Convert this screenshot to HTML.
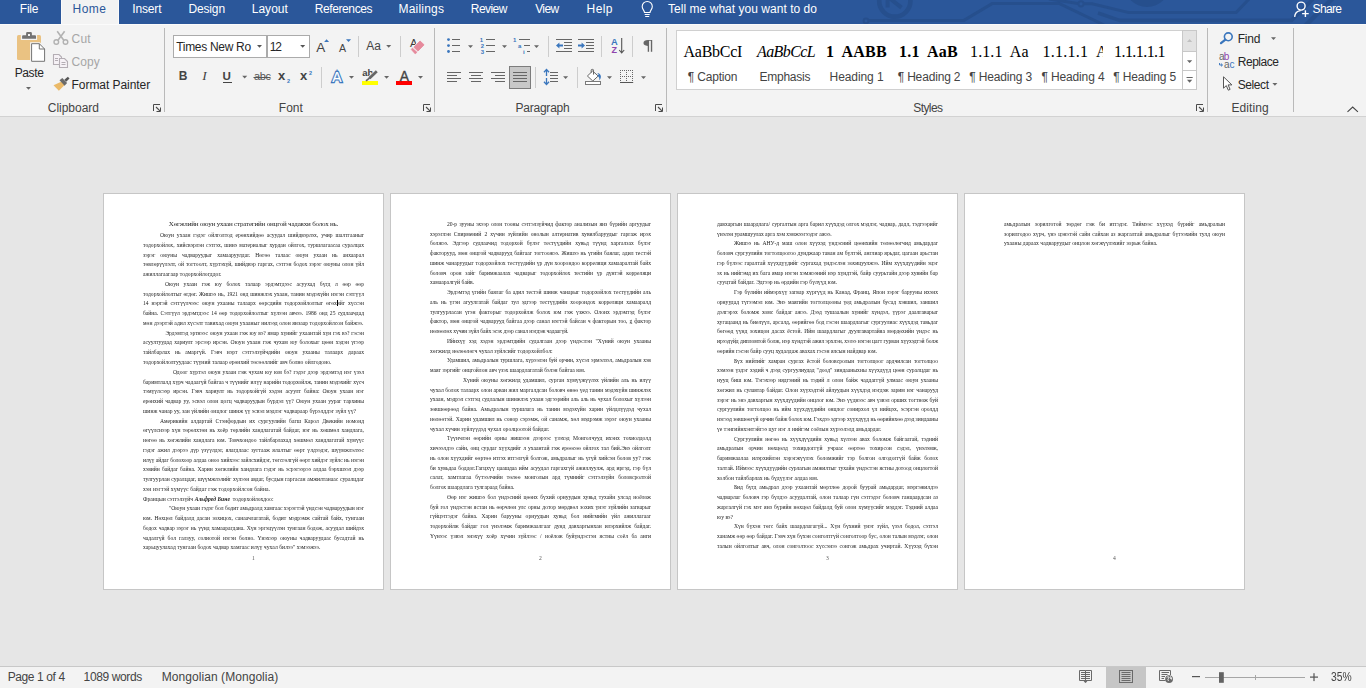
<!DOCTYPE html>
<html lang="mn"><head><meta charset="utf-8"><title>Word</title>
<style>
html,body{margin:0;padding:0;}
body{width:1366px;height:688px;overflow:hidden;position:relative;background:#e6e6e6;font-family:"Liberation Sans",sans-serif;}
.abs{position:absolute;}
#titlebar{position:absolute;left:0;top:0;width:1366px;height:24px;background:#2b579a;overflow:hidden;}
#hometab{position:absolute;left:61px;top:0;width:58px;height:25px;background:#f3f3f3;border-left:1px solid #fbfbfb;border-right:1px solid #fbfbfb;box-sizing:border-box;}
#ribbon{position:absolute;left:0;top:24px;width:1366px;height:92px;background:#f3f3f3;border-top:1px solid #fbfbfb;border-bottom:1px solid #d2d2d2;box-sizing:content-box;height:91px;}
#status{position:absolute;left:0;top:666px;width:1366px;height:22px;background:#f3f3f3;border-top:1px solid #c8c8c8;box-sizing:border-box;}
.t{position:absolute;white-space:pre;display:block;}
.sep{position:absolute;width:1px;background:#b9b9b9;}
.sep.s{background:#cdcdcd;}
.page{position:absolute;top:193px;width:279px;height:395px;background:#fff;border:1px solid #c6c6c6;}
.dl{position:absolute;height:9.75px;line-height:9.75px;font-family:"Liberation Serif",serif;color:#1e1e1e;white-space:nowrap;overflow:visible;}
.dl>span{display:inline;}
svg{position:absolute;overflow:visible;}
.box{position:absolute;box-sizing:border-box;}
#doc{position:absolute;left:0;top:0;width:1366px;height:688px;filter:grayscale(1);pointer-events:none;}

</style></head><body>
<div id="titlebar">
<svg width="1366" height="24" viewBox="0 0 1366 24" style="left:0;top:0">
 <g fill="none" stroke="#264f8d" stroke-linejoin="round">
  <circle cx="894.8" cy="1" r="15.6" stroke-width="4.6"/>
  <path d="M887.6 -1 V7.4 M890.5 -1 L901.5 7.6" stroke-width="4"/>
  <circle cx="866" cy="21" r="2.4" stroke-width="2"/>
  <path d="M868.5 20.6 H963.5 L992.5 3.4 H1059 L1100 23 L1104 25" stroke-width="3"/>
  <path d="M1049 -1 L1078 3.5" stroke-width="3"/>
  <circle cx="1081" cy="3.8" r="2.6" stroke-width="2"/>
  <path d="M1084 3.8 H1092 L1129 12.6 H1236 L1249 -1" stroke-width="3"/>
  <path d="M1098 13 L1119.5 20.4 H1291.5 L1313 -1" stroke-width="3.6"/>
  <path d="M1305 26 L1333 -2" stroke-width="4.4"/>
 </g>
 <circle cx="1147" cy="-16" r="23" fill="#264f8d"/>
</svg>
</div>
<div id="hometab"></div>
<div id="ribbon"></div>
<div id="status"></div>
<!-- group separators -->
<div class="sep" style="left:164px;top:28px;height:84px"></div>
<div class="sep" style="left:434px;top:28px;height:84px"></div>
<div class="sep" style="left:666px;top:28px;height:84px"></div>
<div class="sep" style="left:1207px;top:28px;height:84px"></div>
<div class="sep" style="left:1293px;top:28px;height:84px"></div>
<!-- small separators -->
<div class="sep s" style="left:321px;top:67px;height:21px"></div>
<div class="sep s" style="left:358px;top:36px;height:21px"></div>
<div class="sep s" style="left:400px;top:36px;height:21px"></div>
<div class="sep s" style="left:548px;top:36px;height:21px"></div>
<div class="sep s" style="left:601px;top:36px;height:21px"></div>
<div class="sep s" style="left:632px;top:36px;height:21px"></div>
<div class="sep s" style="left:535px;top:67px;height:21px"></div>
<div class="sep s" style="left:577px;top:67px;height:21px"></div>
<!-- font boxes -->
<div class="box" style="left:173px;top:35px;width:94px;height:23px;background:#fff;border:1px solid #ababab"></div>
<div class="box" style="left:267px;top:35px;width:43px;height:23px;background:#fff;border:1px solid #ababab"></div>
<!-- justify selected -->
<div class="box" style="left:509px;top:66px;width:22px;height:23px;background:#c8c8c8;border:1px solid #7c7c7c"></div>
<!-- styles gallery -->
<div class="box" style="left:676px;top:30px;width:521px;height:60px;background:#fff;border:1px solid #d0d0d0"></div>
<div class="box" style="left:1182px;top:30px;width:15px;height:22px;background:#e3e3e3;border:1px solid #c8c8c8"></div>
<div class="box" style="left:1182px;top:51px;width:15px;height:20px;background:#fff;border:1px solid #c8c8c8"></div>
<div class="box" style="left:1182px;top:70px;width:15px;height:20px;background:#fff;border:1px solid #c8c8c8"></div>
<!-- status selected view -->
<div class="box" style="left:1106px;top:667px;width:40px;height:21px;background:#c6c6c6"></div>
<svg width="1366" height="688" viewBox="0 0 1366 688" style="left:0;top:0" shape-rendering="auto">
<defs>
 <path id="dd" d="M0 0 h5 l-2.5 2.8 z"/>
 <g id="launch" fill="none" stroke="#4a4a4a" stroke-width="1"><path d="M0.5 7 V0.5 H7"/><path d="M3 3 L7.2 7.2" stroke-width="1.1"/><path d="M3.5 7.5 H7.5 V3.5"/></g>
</defs>
<!-- lightbulb -->
<g fill="none" stroke="#fff" stroke-width="1.1">
 <path d="M644.5 12.5 c0 -2 -2.3 -3 -2.3 -6 a5.05 5.05 0 0 1 10.1 0 c0 3 -2.3 4 -2.3 6 z"/>
 <path d="M644.7 14.5 h5 M645.2 16.5 h4"/>
</g>
<!-- share person -->
<g fill="none" stroke="#fff" stroke-width="1.4">
 <circle cx="1301.1" cy="6.1" r="4.0"/>
 <path d="M1294.6 16.9 C1294.9 13.2 1297.3 11 1300.6 10.6"/>
 <path d="M1302.1 13.6 h6.6 M1305.4 10.3 v6.6"/>
</g>
<!-- Paste icon -->
<rect x="17" y="35" width="24" height="25" rx="1.6" fill="#eac282"/>
<rect x="20.8" y="33" width="16.3" height="7" fill="#f3f3f3"/>
<path d="M22.1 38.8 V36.2 q0 -1 1 -1 H26.1 V33.3 q0 -1.2 1.2 -1.2 H30.7 q1.2 0 1.2 1.2 V35.2 H35 q1 0 1 1 V38.8 z" fill="#737373"/>
<rect x="28" y="34" width="2" height="2" fill="#f3f3f3"/>
<path d="M31.6 43.7 H39.3 L44.6 49 V61.3 H31.6 Z" fill="#f3f3f3" stroke="#f3f3f3" stroke-width="3"/>
<path d="M31.6 43.7 H39.3 L44.6 49 V61.3 H31.6 Z" fill="#fff" stroke="#737373" stroke-width="1"/>
<path d="M39.3 43.7 V49 H44.6" fill="none" stroke="#737373" stroke-width="1"/>
<use href="#dd" x="26" y="87" fill="#666"/>
<!-- Cut (disabled) -->
<g fill="none" stroke="#b2b2b2" stroke-width="1.4">
 <circle cx="56.3" cy="42" r="2.3"/><circle cx="65.5" cy="42" r="2.3"/>
 <path d="M58 40.2 L64.6 31.2 M63.8 40.2 L57.2 31.2" stroke-width="1.6"/>
</g>
<!-- Copy (disabled) -->
<g fill="#f6f2f6" stroke="#b4aeb4" stroke-width="1.1">
 <path d="M53.5 54.5 h5.5 l2.5 2.5 v7.5 h-8 z"/>
 <path d="M59.5 58.5 h5 l3 3 v6 h-8 z"/>
 <path d="M55 58.5 h3 M55 60.5 h3 M61.5 62.5 h4 M61.5 64.5 h4" />
</g>
<!-- Format painter -->
<path d="M53.5 85.2 l8.2 -3.8 l3.2 3.4 l-6 6 z" fill="#eab968"/>
<path d="M59.5 80.3 l2.8 -2.2 l4.8 5 l-2.5 2.6 z" fill="#6a6a6a"/>
<path d="M64.3 79.8 l3.6 -3 l1.6 1.7 l-3.3 3.2 z" fill="#555"/>
<!-- launchers -->
<use href="#launch" x="153" y="104"/>
<use href="#launch" x="423" y="104"/>
<use href="#launch" x="655" y="104"/>
<use href="#launch" x="1196" y="104"/>
<!-- font box arrows -->
<use href="#dd" x="257" y="45" fill="#555"/>
<use href="#dd" x="300.2" y="45" fill="#555"/>
<!-- grow/shrink triangles -->
<path d="M324.1 42.1 l2.5 -2.9 l2.5 2.9 z" fill="#3a76bd"/>
<path d="M346 39.2 h5.1 l-2.55 2.9 z" fill="#3a76bd"/>
<use href="#dd" x="386.2" y="45" fill="#666"/>
<!-- clear formatting eraser -->

<!-- U arrow -->
<use href="#dd" x="242.2" y="75.8" fill="#666"/>
<!-- underline for U -->
<rect x="223" y="82" width="9" height="1" fill="#444"/>
<!-- strike for abc -->
<rect x="253.5" y="77" width="17" height="1" fill="#555"/>
<!-- text effects A -->
<use href="#dd" x="349" y="76" fill="#666"/>
<!-- highlight -->

<rect x="362" y="81" width="16" height="4" fill="#ffff00"/>
<use href="#dd" x="384.1" y="76" fill="#666"/>
<!-- font color -->
<rect x="396" y="81" width="16" height="4" fill="#ff0000"/>
<use href="#dd" x="418" y="76" fill="#666"/>
<!-- bullets -->
<g fill="#3a76bd"><circle cx="448.5" cy="39.6" r="1.4"/><circle cx="448.5" cy="45.6" r="1.4"/><circle cx="448.5" cy="51.5" r="1.4"/></g>
<g stroke="#666" stroke-width="1" fill="none">
 <path d="M452 39.5 h8 M452 45.5 h8 M452 51.5 h8"/>
 <path d="M486 39.5 h9 M486 45.5 h9 M486 51.5 h9"/>
 <path d="M519 39.5 h11 M524 45.5 h6 M527 51.5 h3"/>
</g>
<use href="#dd" x="468" y="45.2" fill="#666"/>
<use href="#dd" x="502" y="45.2" fill="#666"/>
<use href="#dd" x="534" y="45.2" fill="#666"/>
<!-- indent icons -->
<g stroke="#666" stroke-width="1" fill="none">
 <path d="M556 39.5 h16 M564 42.5 h8 M564 45.5 h8 M564 48.5 h8 M556 51.5 h16"/>
 <path d="M578 39.5 h16 M586 42.5 h8 M586 45.5 h8 M586 48.5 h8 M578 51.5 h16"/>
</g>
<g fill="#3a76bd">
 <path d="M556 45.5 l3.4 -3 v2 h3.6 v2 h-3.6 v2 z"/>
 <path d="M585 45.5 l-3.4 -3 v2 h-3.6 v2 h3.6 v2 z"/>
</g>
<!-- sort arrow -->
<path d="M621.7 38 v14.5 M619.2 50 l2.5 2.8 l2.5 -2.8" stroke="#555" stroke-width="1.1" fill="none"/>
<!-- align icons -->
<g stroke="#666" stroke-width="1" fill="none">
 <path d="M447 72.5 h14 M447 75.5 h10 M447 78.5 h14 M447 81.5 h10"/>
 <path d="M469 72.5 h14 M471 75.5 h10 M469 78.5 h14 M471 81.5 h10"/>
 <path d="M491 72.5 h14 M495 75.5 h10 M491 78.5 h14 M495 81.5 h10"/>
 <path d="M513 72.5 h14 M513 75.5 h14 M513 78.5 h14 M513 81.5 h14"/>
 <path d="M550 72.5 h8 M550 75.5 h8 M550 78.5 h8 M550 81.5 h8"/>
</g>
<!-- line spacing arrows -->
<path d="M546.5 70 v6 M546.5 78 v6 M544 72.2 l2.5 -2.8 l2.5 2.8 M544 81.8 l2.5 2.8 l2.5 -2.8" stroke="#3a76bd" stroke-width="1.3" fill="none"/>
<use href="#dd" x="563.1" y="76.2" fill="#666"/>
<!-- shading -->
<path d="M592.6 71 l5.6 5 l-5.4 5 l-5.4 -5 z" fill="#fff" stroke="#666" stroke-width="1"/>
<path d="M591.2 72.6 v-2.4 q0 -0.8 0.8 -0.8 h0.7 q0.8 0 0.8 0.8 v4.4" fill="none" stroke="#666" stroke-width="1"/>
<path d="M597.2 73 C600.6 73.2 602.4 77 599.4 80.4 C599.7 77.8 598.9 76.5 597.3 75.7 L598.7 74.4 Z" fill="#3a76bd"/>
<rect x="585.5" y="81.5" width="15" height="3" fill="#fff" stroke="#7a7a7a" stroke-width="1"/>
<use href="#dd" x="607" y="76.2" fill="#666"/>
<!-- borders -->
<g stroke="#666" stroke-width="1" stroke-dasharray="1 1" fill="none">
 <path d="M620 70.5 h13 M620.5 70 v12 M632.5 70 v12 M626.5 70 v12 M620 76.5 h13"/>
</g>
<path d="M620 82.5 h13.2" stroke="#555" stroke-width="1" fill="none"/>
<use href="#dd" x="641" y="76.2" fill="#666"/>
<!-- gallery scroll arrows -->
<path d="M1187 42 l2.6 -2.9 l2.6 2.9 z" fill="#c0c0c0"/>
<path d="M1187 60.2 h5.2 l-2.6 2.9 z" fill="#666"/>
<path d="M1186.5 77.5 h6.2" stroke="#666" stroke-width="1"/>
<path d="M1187 79.8 h5.2 l-2.6 2.9 z" fill="#666"/>
<!-- find -->
<circle cx="1228.3" cy="36.8" r="3.9" fill="none" stroke="#3a76bd" stroke-width="1.6"/>
<path d="M1225.4 39.6 L1221 43.2" stroke="#3a76bd" stroke-width="2.2" stroke-linecap="round"/>
<use href="#dd" x="1271" y="37.2" fill="#666"/>
<!-- replace small arrow -->
<path d="M1219.6 63 v2 h2.6 M1221 63.6 l1.5 1.4 l-1.5 1.4" stroke="#3a76bd" stroke-width="1" fill="none"/>
<!-- select cursor -->
<path d="M1223.5 76.8 v11.4 l2.8 -2.6 l2 4.6 l1.8 -0.8 l-2 -4.5 h3.8 z" fill="#fff" stroke="#555" stroke-width="1" stroke-linejoin="round"/>
<use href="#dd" x="1272.4" y="83" fill="#666"/>
<!-- collapse chevron -->
<path d="M1347.5 111.8 l5.2 -4.7 l5.2 4.7" fill="none" stroke="#444" stroke-width="1.1"/>
<!-- status bar icons -->
<g fill="none" stroke="#6a6a6a" stroke-width="1">
 <path d="M1085.5 670.5 H1079.5 V680.5 H1091.5 V670.5 H1085.5 V682"/>
 <path d="M1081 672.5 h9 M1081 674.5 h9 M1081 676.5 h9 M1081 678.5 h9"/>
 <path d="M1084 681 l1.5 1.8 l1.5 -1.8" />
 <rect x="1119.5" y="670.5" width="13" height="12"/>
 <path d="M1121.5 672.5 h9 M1121.5 674.5 h9 M1121.5 676.5 h9 M1121.5 678.5 h9 M1121.5 680.5 h9"/>
 <path d="M1165.5 680.5 H1159.5 V670.5 H1170.5 V675"/>
 <path d="M1161.5 672.5 h7.5 M1161.5 674.5 h6 M1161.5 676.5 h3.5 M1161.5 678.5 h2.5"/>
</g>
<circle cx="1169.1" cy="679.1" r="3.9" fill="#6a6a6a"/>
<path d="M1166.6 677.6 q1.2 -1.4 2.4 -0.6 q0.2 1.4 -1 1.8 q-0.4 1.2 0.6 2.2 M1170.4 676.6 q1.6 0.8 1.2 2.6 q-1 -0.2 -1.4 -1.2 z" fill="none" stroke="#f3f3f3" stroke-width="0.9"/>
<!-- zoom slider -->
<rect x="1192" y="676" width="8" height="1.2" fill="#555"/>
<rect x="1205" y="677" width="100" height="1" fill="#a6a6a6"/>
<rect x="1255" y="675" width="1" height="5" fill="#a6a6a6"/>
<rect x="1219" y="672.2" width="4.8" height="10.6" fill="#636363"/>
<rect x="1310" y="676.5" width="8" height="1.2" fill="#555"/>
<rect x="1313.4" y="673.2" width="1.2" height="7.9" fill="#555"/>
<!-- text cursor on page 1 -->
<rect x="337" y="300" width="1" height="6" fill="#000"/>
</svg>

<div id="uitext">
<span class="t" style="left:19.80px;top:1.00px;font-size:12px;line-height:17px;color:#ffffff;font-family:'Liberation Sans',sans-serif;letter-spacing:-0.233px;">File</span>
<span class="t" style="left:72.50px;top:1.00px;font-size:12px;line-height:17px;color:#2b579a;font-family:'Liberation Sans',sans-serif;letter-spacing:0.500px;">Home</span>
<span class="t" style="left:132.30px;top:1.00px;font-size:12px;line-height:17px;color:#ffffff;font-family:'Liberation Sans',sans-serif;letter-spacing:-0.160px;">Insert</span>
<span class="t" style="left:188.50px;top:1.00px;font-size:12px;line-height:17px;color:#ffffff;font-family:'Liberation Sans',sans-serif;letter-spacing:-0.160px;">Design</span>
<span class="t" style="left:251.70px;top:1.00px;font-size:12px;line-height:17px;color:#ffffff;font-family:'Liberation Sans',sans-serif;letter-spacing:0.040px;">Layout</span>
<span class="t" style="left:314.70px;top:1.00px;font-size:12px;line-height:17px;color:#ffffff;font-family:'Liberation Sans',sans-serif;letter-spacing:-0.389px;">References</span>
<span class="t" style="left:398.50px;top:1.00px;font-size:12px;line-height:17px;color:#ffffff;font-family:'Liberation Sans',sans-serif;letter-spacing:0.200px;">Mailings</span>
<span class="t" style="left:470.80px;top:1.00px;font-size:12px;line-height:17px;color:#ffffff;font-family:'Liberation Sans',sans-serif;letter-spacing:-0.560px;">Review</span>
<span class="t" style="left:535.20px;top:1.00px;font-size:12px;line-height:17px;color:#ffffff;font-family:'Liberation Sans',sans-serif;letter-spacing:-0.600px;">View</span>
<span class="t" style="left:586.60px;top:1.00px;font-size:12px;line-height:17px;color:#ffffff;font-family:'Liberation Sans',sans-serif;letter-spacing:0.367px;">Help</span>
<span class="t" style="left:668.10px;top:1.00px;font-size:12px;line-height:17px;color:#ffffff;font-family:'Liberation Sans',sans-serif;letter-spacing:0.031px;">Tell me what you want to do</span>
<span class="t" style="left:1312.60px;top:1.00px;font-size:12px;line-height:17px;color:#ffffff;font-family:'Liberation Sans',sans-serif;letter-spacing:-0.650px;">Share</span>
<span class="t" style="left:14.70px;top:65.00px;font-size:12px;line-height:17px;color:#262626;font-family:'Liberation Sans',sans-serif;letter-spacing:-0.375px;">Paste</span>
<span class="t" style="left:71.60px;top:31.00px;font-size:12px;line-height:17px;color:#a6a6a6;font-family:'Liberation Sans',sans-serif;letter-spacing:0.200px;">Cut</span>
<span class="t" style="left:71.60px;top:54.00px;font-size:12px;line-height:17px;color:#a6a6a6;font-family:'Liberation Sans',sans-serif;letter-spacing:0.033px;">Copy</span>
<span class="t" style="left:71.60px;top:77.00px;font-size:12px;line-height:17px;color:#262626;font-family:'Liberation Sans',sans-serif;letter-spacing:-0.062px;">Format Painter</span>
<span class="t" style="left:47.80px;top:100.00px;font-size:12px;line-height:17px;color:#444444;font-family:'Liberation Sans',sans-serif;letter-spacing:-0.025px;">Clipboard</span>
<span class="t" style="left:176.20px;top:39.00px;font-size:12px;line-height:17px;color:#262626;font-family:'Liberation Sans',sans-serif;letter-spacing:-0.300px;">Times New Ro</span>
<span class="t" style="left:269.80px;top:39.00px;font-size:12px;line-height:17px;color:#262626;font-family:'Liberation Sans',sans-serif;letter-spacing:-1.200px;">12</span>
<span class="t" style="left:278.80px;top:100.00px;font-size:12px;line-height:17px;color:#444444;font-family:'Liberation Sans',sans-serif;">Font</span>
<span class="t" style="left:515.40px;top:100.00px;font-size:12px;line-height:17px;color:#444444;font-family:'Liberation Sans',sans-serif;letter-spacing:-0.212px;">Paragraph</span>
<span class="t" style="left:913.30px;top:100.00px;font-size:12px;line-height:17px;color:#444444;font-family:'Liberation Sans',sans-serif;letter-spacing:-0.600px;">Styles</span>
<span class="t" style="left:1231.50px;top:100.00px;font-size:12px;line-height:17px;color:#444444;font-family:'Liberation Sans',sans-serif;letter-spacing:0.083px;">Editing</span>
<span class="t" style="left:1237.70px;top:31.00px;font-size:12px;line-height:17px;color:#262626;font-family:'Liberation Sans',sans-serif;letter-spacing:-0.167px;">Find</span>
<span class="t" style="left:1237.70px;top:54.00px;font-size:12px;line-height:17px;color:#262626;font-family:'Liberation Sans',sans-serif;letter-spacing:-0.450px;">Replace</span>
<span class="t" style="left:1237.70px;top:77.00px;font-size:12px;line-height:17px;color:#262626;font-family:'Liberation Sans',sans-serif;letter-spacing:-0.400px;">Select</span>
<span class="t" style="left:683.50px;top:41.00px;font-size:16px;line-height:22px;color:#000;font-family:'Liberation Serif',serif;letter-spacing:-0.250px;">AaBbCcI</span>
<span class="t" style="left:687.80px;top:69.00px;font-size:12px;line-height:17px;color:#444444;font-family:'Liberation Sans',sans-serif;letter-spacing:-0.175px;">¶ Caption</span>
<span class="t" style="left:757.00px;top:41.00px;font-size:16px;line-height:22px;color:#000;font-family:'Liberation Serif',serif;font-style:italic;letter-spacing:-0.583px;">AaBbCcL</span>
<span class="t" style="left:759.50px;top:69.00px;font-size:12px;line-height:17px;color:#444444;font-family:'Liberation Sans',sans-serif;letter-spacing:-0.257px;">Emphasis</span>
<span class="t" style="left:826.00px;top:41.00px;font-size:16px;line-height:22px;color:#000;font-family:'Liberation Serif',serif;font-weight:bold;letter-spacing:0.167px;">1  AABB</span>
<span class="t" style="left:829.60px;top:69.00px;font-size:12px;line-height:17px;color:#444444;font-family:'Liberation Sans',sans-serif;letter-spacing:-0.088px;">Heading 1</span>
<span class="t" style="left:899.00px;top:41.00px;font-size:16px;line-height:22px;color:#000;font-family:'Liberation Serif',serif;font-weight:bold;letter-spacing:0.200px;">1.1  AaB</span>
<span class="t" style="left:897.70px;top:69.00px;font-size:12px;line-height:17px;color:#444444;font-family:'Liberation Sans',sans-serif;letter-spacing:-0.170px;">¶ Heading 2</span>
<span class="t" style="left:970.10px;top:41.00px;font-size:16px;line-height:22px;color:#000;font-family:'Liberation Serif',serif;letter-spacing:0.087px;">1.1.1  Aa</span>
<span class="t" style="left:969.20px;top:69.00px;font-size:12px;line-height:17px;color:#444444;font-family:'Liberation Sans',sans-serif;letter-spacing:-0.150px;">¶ Heading 3</span>
<span class="t" style="left:1042.60px;top:41.00px;font-size:16px;line-height:22px;color:#000;font-family:'Liberation Serif',serif;letter-spacing:0.244px;clip-path:inset(0 4.8px 0 0);">1.1.1.1  A</span>
<span class="t" style="left:1041.40px;top:69.00px;font-size:12px;line-height:17px;color:#444444;font-family:'Liberation Sans',sans-serif;letter-spacing:-0.130px;">¶ Heading 4</span>
<span class="t" style="left:1114.00px;top:41.00px;font-size:16px;line-height:22px;color:#000;font-family:'Liberation Serif',serif;letter-spacing:-0.562px;">1.1.1.1.1</span>
<span class="t" style="left:1113.30px;top:69.00px;font-size:12px;line-height:17px;color:#444444;font-family:'Liberation Sans',sans-serif;letter-spacing:-0.170px;">¶ Heading 5</span>
<span class="t" style="left:7.70px;top:669.00px;font-size:12px;line-height:17px;color:#444444;font-family:'Liberation Sans',sans-serif;letter-spacing:-0.400px;">Page 1 of 4</span>
<span class="t" style="left:83.60px;top:669.00px;font-size:12px;line-height:17px;color:#444444;font-family:'Liberation Sans',sans-serif;letter-spacing:-0.378px;">1089 words</span>
<span class="t" style="left:161.80px;top:669.00px;font-size:12px;line-height:17px;color:#444444;font-family:'Liberation Sans',sans-serif;letter-spacing:0.058px;">Mongolian (Mongolia)</span>
<span class="t" style="left:1330.60px;top:669.00px;font-size:12px;line-height:17px;color:#444444;font-family:'Liberation Sans',sans-serif;transform:scaleX(0.86);transform-origin:0 0;">35%</span>
<span class="t" style="left:178.70px;top:68.00px;font-size:12px;line-height:17px;color:#444444;font-family:'Liberation Sans',sans-serif;font-weight:bold;">B</span>
<span class="t" style="left:202.20px;top:66.00px;font-size:13.5px;line-height:19px;color:#444444;font-family:'Liberation Serif',serif;font-style:italic;">I</span>
<span class="t" style="left:222.40px;top:68.00px;font-size:11.6px;line-height:16px;color:#444444;font-family:'Liberation Sans',sans-serif;font-weight:bold;">U</span>
<span class="t" style="left:254.00px;top:69.00px;font-size:11px;line-height:15px;color:#555;font-family:'Liberation Sans',sans-serif;letter-spacing:-0.400px;">abc</span>
<span class="t" style="left:278.00px;top:67.00px;font-size:13px;line-height:18px;color:#444444;font-family:'Liberation Sans',sans-serif;font-weight:bold;">x</span>
<span class="t" style="left:287.00px;top:77.00px;font-size:5.5px;line-height:8px;color:#3a76bd;font-family:'Liberation Sans',sans-serif;font-weight:bold;">2</span>
<span class="t" style="left:300.00px;top:67.00px;font-size:13px;line-height:18px;color:#444444;font-family:'Liberation Sans',sans-serif;font-weight:bold;">x</span>
<span class="t" style="left:309.00px;top:69.00px;font-size:5.5px;line-height:8px;color:#3a76bd;font-family:'Liberation Sans',sans-serif;font-weight:bold;">2</span>
<span class="t" style="left:316.20px;top:38.00px;font-size:13.5px;line-height:19px;color:#444444;font-family:'Liberation Sans',sans-serif;">A</span>
<span class="t" style="left:339.00px;top:41.00px;font-size:10.6px;line-height:15px;color:#444444;font-family:'Liberation Sans',sans-serif;">A</span>
<span class="t" style="left:366.20px;top:38.00px;font-size:12px;line-height:17px;color:#444444;font-family:'Liberation Sans',sans-serif;">Aa</span>
<span class="t" style="left:409.90px;top:35.00px;font-size:11.2px;line-height:16px;color:#3a3a3a;font-family:'Liberation Sans',sans-serif;">A</span>
<span class="t" style="left:332.20px;top:67.00px;font-size:14px;line-height:20px;color:#fff;font-family:'Liberation Sans',sans-serif;-webkit-text-stroke:2.5px #2f6db8;paint-order:stroke fill;text-shadow:0 0 2px #b5cfec;">A</span>
<span class="t" style="left:362.20px;top:66.00px;font-size:9.5px;line-height:13px;color:#444;font-family:'Liberation Sans',sans-serif;font-weight:bold;">ab</span>
<span class="t" style="left:399.80px;top:67.00px;font-size:13.8px;line-height:19px;color:#444444;font-family:'Liberation Sans',sans-serif;-webkit-text-stroke:0.35px #444;">A</span>
<span class="t" style="left:479.80px;top:36.00px;font-size:6px;line-height:8px;color:#3a76bd;font-family:'Liberation Sans',sans-serif;font-weight:bold;">1</span>
<span class="t" style="left:480.80px;top:42.00px;font-size:6px;line-height:8px;color:#3a76bd;font-family:'Liberation Sans',sans-serif;font-weight:bold;">2</span>
<span class="t" style="left:480.80px;top:48.00px;font-size:6px;line-height:8px;color:#3a76bd;font-family:'Liberation Sans',sans-serif;font-weight:bold;">3</span>
<span class="t" style="left:513.00px;top:36.00px;font-size:6px;line-height:8px;color:#3a76bd;font-family:'Liberation Sans',sans-serif;font-weight:bold;">1</span>
<span class="t" style="left:518.00px;top:42.00px;font-size:6px;line-height:8px;color:#3a76bd;font-family:'Liberation Sans',sans-serif;font-weight:bold;">a</span>
<span class="t" style="left:522.90px;top:48.00px;font-size:6px;line-height:8px;color:#3a76bd;font-family:'Liberation Sans',sans-serif;font-weight:bold;">i</span>
<span class="t" style="left:611.00px;top:36.00px;font-size:9.3px;line-height:13px;color:#3a76bd;font-family:'Liberation Sans',sans-serif;font-weight:bold;">A</span>
<span class="t" style="left:611.50px;top:44.00px;font-size:9px;line-height:13px;color:#8e44ad;font-family:'Liberation Sans',sans-serif;font-weight:bold;">Z</span>
<span class="t" style="left:642.30px;top:35.00px;font-size:14px;line-height:20px;color:#666;font-family:'DejaVu Sans',sans-serif;transform:scaleX(1.38);transform-origin:0 0;">¶</span>
<span class="t" style="left:1219.00px;top:50.00px;font-size:10px;line-height:14px;color:#666;font-family:'Liberation Sans',sans-serif;">a</span>
<span class="t" style="left:1223.70px;top:50.00px;font-size:10px;line-height:14px;color:#8e44ad;font-family:'Liberation Sans',sans-serif;">b</span>
<span class="t" style="left:1223.90px;top:58.00px;font-size:10px;line-height:14px;color:#666;font-family:'Liberation Sans',sans-serif;">a</span>
<span class="t" style="left:1229.60px;top:58.00px;font-size:10px;line-height:14px;color:#3a76bd;font-family:'Liberation Sans',sans-serif;">c</span>
</div>
<svg width="80" height="70" viewBox="360 30 80 70" style="left:360px;top:30px">
<path d="M420.06 40.98 L424.07 44.82 L417.96 51.1 L413.95 47.26 z" fill="#e68a9c" stroke="#f3f3f3" stroke-width="2.2" stroke-linejoin="round"/>
<path d="M420.06 40.98 L424.07 44.82 L417.96 51.1 L413.95 47.26 z" fill="#e68a9c" stroke="#e68a9c" stroke-width="0.9" stroke-linejoin="round"/>
<path d="M412.38 47.96 L417.09 52.32 L415.17 53.9 L411.16 49.53 z" fill="#e68a9c" stroke="#e68a9c" stroke-width="0.5" stroke-linejoin="round"/>
<path d="M376.8 71.2 L369.4 78.2" stroke="#f3f3f3" stroke-width="4.2" fill="none"/><path d="M376.8 71.2 L369.4 78.2" stroke="#666" stroke-width="2.8" fill="none"/><path d="M370.3 77.3 L366 80.9" stroke="#666" stroke-width="1.7" fill="none"/>
</svg>

<div id="doc">
<div class="page" style="left:103px"></div>
<div class="dl" style="left:143.00px;top:220.00px;width:221.00px;font-size:7px;text-align:center;letter-spacing:-0.191px;"><span>Хөгжлийн оюун ухаан стратегийн онцгой чадавхи болох нь.</span></div>
<div class="dl" style="left:159.90px;top:231.00px;width:204.10px;font-size:5.62px;text-align:justify;text-align-last:justify;"><span>Оюун ухаан гэдэг ойлголтод ерөнхийдөө асуудал шийдвэрлэх, учир шалтгааныг</span></div>
<div class="dl" style="left:143.00px;top:241.00px;width:221.00px;font-size:5.62px;text-align:justify;text-align-last:justify;"><span>тодорхойлох, хийсвэрлэн сэтгэх, шинэ материалыг хурдан ойлгох, туршлагаасаа суралцах</span></div>
<div class="dl" style="left:143.00px;top:251.00px;width:221.00px;font-size:5.62px;text-align:justify;text-align-last:justify;"><span>зэрэг оюуны чадваруудыг хамааруулдаг.  Нөгөө талаас оюун ухаан нь анхаарал</span></div>
<div class="dl" style="left:143.00px;top:260.00px;width:221.00px;font-size:5.62px;text-align:justify;text-align-last:justify;"><span>төвлөрүүлэлт, ой тогтоолт, хүртэхүй, шийдвэр гаргах, сэтгэн бодох зэрэг оюуны олон үйл</span></div>
<div class="dl" style="left:143.00px;top:270.00px;width:221.00px;font-size:5.62px;letter-spacing:0.041px;"><span>ажиллагаагаар тодорхойлогддог.</span></div>
<div class="dl" style="left:164.90px;top:280.00px;width:199.10px;font-size:5.62px;text-align:justify;text-align-last:justify;"><span>Оюун ухаан гэж юу болох талаар эрдэмтдээс асуухад бүгд л өөр өөр</span></div>
<div class="dl" style="left:143.00px;top:290.00px;width:221.00px;font-size:5.62px;text-align:justify;text-align-last:justify;"><span>тодорхойлолтыг өгдөг. Жишээ нь, 1921 онд шинжлэх ухаан, танин мэдэхүйн нэгэн сэтгүүл</span></div>
<div class="dl" style="left:143.00px;top:299.00px;width:221.00px;font-size:5.62px;text-align:justify;text-align-last:justify;"><span>14 нэртэй сэтгүүлчээс оюун ухааны талаарх өөрсдийн тодорхойлолтыг өгөхийг хүссэн</span></div>
<div class="dl" style="left:143.00px;top:309.00px;width:221.00px;font-size:5.62px;text-align:justify;text-align-last:justify;"><span>байна. Сэтгүүл эрдэмтдээс 14 өөр тодорхойлолтыг хүлээн авчээ. 1986 онд 25 судлаачдад</span></div>
<div class="dl" style="left:143.00px;top:319.00px;width:221.00px;font-size:5.62px;letter-spacing:0.056px;"><span>мөн дээртэй адил хүсэлт тавихад оюун ухааныг нилээд олон янзаар тодорхойлсон байжээ.</span></div>
<div class="dl" style="left:165.40px;top:329.00px;width:198.60px;font-size:5.62px;text-align:justify;text-align-last:justify;"><span>Эрдэмтэд эртнээс оюун ухаан гэж юу вэ? ямар хүнийг ухаантай хүн гэх вэ? гэсэн</span></div>
<div class="dl" style="left:143.00px;top:338.00px;width:221.00px;font-size:5.62px;text-align:justify;text-align-last:justify;"><span>асуултуудад хариулт эрсээр ирсэн.  Оюун ухаан гэж чухам юу болохыг цөөн хэдэн үгээр</span></div>
<div class="dl" style="left:143.00px;top:348.00px;width:221.00px;font-size:5.62px;text-align:justify;text-align-last:justify;"><span>тайлбарлах нь амаргүй. Гэвч нэрт сэтгэлзүйчдийн оюун ухааны талаарх дараах</span></div>
<div class="dl" style="left:143.00px;top:358.00px;width:221.00px;font-size:5.62px;letter-spacing:0.033px;"><span>тодорхойлолтуудаас түүний талаар ерөнхий төсөөллийг авч болно ойлгодоно.</span></div>
<div class="dl" style="left:172.90px;top:368.00px;width:191.10px;font-size:5.62px;text-align:justify;text-align-last:justify;"><span>Одоог хүртэл оюун ухаан гэж чухам юу юм бэ? гэдэг дээр эрдэмтэд  нэг үзэл</span></div>
<div class="dl" style="left:143.00px;top:378.00px;width:221.00px;font-size:5.62px;text-align:justify;text-align-last:justify;"><span>баримтлалд хүрч чадаагүй байгаа ч түүнийг илүү нарийн тодорхойлж, танин мэдэхийг хүсч</span></div>
<div class="dl" style="left:143.00px;top:387.00px;width:221.00px;font-size:5.62px;text-align:justify;text-align-last:justify;"><span>тэмүүлсээр ирсэн. Гэвч хариулт нь тодорхойгүй хэдэн асуулт байна: Оюун ухаан нэг</span></div>
<div class="dl" style="left:143.00px;top:397.00px;width:221.00px;font-size:5.62px;text-align:justify;text-align-last:justify;"><span>ерөнхий чадвар уу, эсвэл олон цогц чадваруудын бүрдэл үү? Оюун ухаан уураг тархины</span></div>
<div class="dl" style="left:143.00px;top:407.00px;width:221.00px;font-size:5.62px;letter-spacing:0.036px;"><span>шинж чанар уу, зан үйлийн онцлог шинж үү эсвэл мэдлэг чадвараар бүрэлддэг зүйл үү?</span></div>
<div class="dl" style="left:159.90px;top:417.00px;width:204.10px;font-size:5.62px;text-align:justify;text-align-last:justify;"><span>Америкийн алдартай Стэнфордын их сургуулийн багш Карол Двекийн номонд</span></div>
<div class="dl" style="left:143.00px;top:426.00px;width:221.00px;font-size:5.62px;text-align:justify;text-align-last:justify;"><span>өгүүлснээр хүн төрөлхтөн нь хоёр төрлийн хандлагатай байдаг, нэг нь хөшмөл хандлага,</span></div>
<div class="dl" style="left:143.00px;top:436.00px;width:221.00px;font-size:5.62px;text-align:justify;text-align-last:justify;"><span>нөгөө нь хөгжлийн хандлага юм. Товчхондоо тайлбарлахад хөшмөл хандлагатай хүмүүс</span></div>
<div class="dl" style="left:143.00px;top:446.00px;width:221.00px;font-size:5.62px;text-align:justify;text-align-last:justify;"><span>гэдэг ажил дээрээ дүр үзүүлдэг, ялагдлаас зугтааж ялалтыг өөрт үлдээдэг, шүүмжлэлээс</span></div>
<div class="dl" style="left:143.00px;top:456.00px;width:221.00px;font-size:5.62px;text-align:justify;text-align-last:justify;letter-spacing:-0.022px;"><span>илүү айдаг болохоор алдаа оноо хийхээс зайлсхийдэг, төгсгөлгүй өөрт хийдэг зүйлс нь нэгэн</span></div>
<div class="dl" style="left:143.00px;top:465.00px;width:221.00px;font-size:5.62px;text-align:justify;text-align-last:justify;"><span>хэвийн байдаг байна. Харин хөгжлийн хандлага гэдэг нь эсрэгээрээ алдаа бэрхшээл дээр</span></div>
<div class="dl" style="left:143.00px;top:475.00px;width:221.00px;font-size:5.62px;text-align:justify;text-align-last:justify;"><span>тулгуурлан суралцдаг, шүүмжлэлийг хүлээн авдаг, бусдын гаргасан амжилтанаас суралцдаг</span></div>
<div class="dl" style="left:143.00px;top:485.00px;width:221.00px;font-size:5.62px;letter-spacing:0.104px;"><span>хэн нэгтэй хүмүүс байдаг гэж тодорхойлсон байна.</span></div>
<div class="dl" style="left:143.00px;top:495.00px;width:221.00px;font-size:5.62px;letter-spacing:0.036px;"><span>Францын сэтгэлзүйч <b><i>Альфред Бине</i></b>&nbsp; тодорхойлохдоо:</span></div>
<div class="dl" style="left:168.90px;top:504.00px;width:195.10px;font-size:5.62px;text-align:justify;text-align-last:justify;letter-spacing:-0.007px;"><span>&quot;Оюун ухаан гэдэг бол бодит амьдралд хамгаас хэрэгтэй үндсэн чадваруудын нэг</span></div>
<div class="dl" style="left:143.00px;top:514.00px;width:221.00px;font-size:5.62px;text-align:justify;text-align-last:justify;"><span>юм. Нөхцөл байдалд дасан зохицох, санаачлагатай, бодит мэдрэмж сайтай байх, тунгаан</span></div>
<div class="dl" style="left:143.00px;top:524.00px;width:221.00px;font-size:5.62px;text-align:justify;text-align-last:justify;"><span>бодох чадвар зэрэг нь үүнд хамаарагдана. Хүн эргэцүүлэн тунгаан бодож, асуудал шийдэх</span></div>
<div class="dl" style="left:143.00px;top:534.00px;width:221.00px;font-size:5.62px;text-align:justify;text-align-last:justify;"><span>чадалгүй бол галзуу, солиотой  нэгэн болно. Үнэхээр оюуны чадваруудаас бусадтай нь</span></div>
<div class="dl" style="left:143.00px;top:543.00px;width:221.00px;font-size:5.62px;letter-spacing:0.040px;"><span>харьцуулахад тунгаан бодох чадвар хамгаас илүү чухал билээ&quot; хэмээжээ.</span></div>
<div class="dl" style="left:143.00px;top:554.00px;width:221.00px;font-size:5.6px;color:#555;text-align:center;"><span>1</span></div>
<div class="page" style="left:390px"></div>
<div class="dl" style="left:446.90px;top:220.00px;width:204.10px;font-size:5.62px;text-align:justify;text-align-last:justify;"><span>20-р зууны эхээр олон тооны сэтгэлзүйчид фактор анализын янз бүрийн аргуудыг</span></div>
<div class="dl" style="left:430.00px;top:230.00px;width:221.00px;font-size:5.62px;text-align:justify;text-align-last:justify;"><span>хэрэглэн  Спирмений 2 хүчин зүйлийн онолын алтернатив хувилбаруудыг гаргаж ирэх</span></div>
<div class="dl" style="left:430.00px;top:239.00px;width:221.00px;font-size:5.62px;text-align:justify;text-align-last:justify;"><span>болжээ. Эдгээр судлаачид тодорхой бүлэг тестүүдийн хувьд түүнд харгалзах бүлэг</span></div>
<div class="dl" style="left:430.00px;top:249.00px;width:221.00px;font-size:5.62px;text-align:justify;text-align-last:justify;"><span>факторууд, мөн онцгой чадварууд байгааг тогтоожээ. Жишээ нь үгийн баялаг, адил тестэй</span></div>
<div class="dl" style="left:430.00px;top:259.00px;width:221.00px;font-size:5.62px;text-align:justify;text-align-last:justify;"><span>шинж чанаруудыг тодорхойлох тестүүдийн үр дүн хоорондоо корреляци хамааралтай байх</span></div>
<div class="dl" style="left:430.00px;top:269.00px;width:221.00px;font-size:5.62px;text-align:justify;text-align-last:justify;"><span>боловч орон зайг баримжаалах чадварыг тодорхойлох тестийн үр дүнтэй корреляци</span></div>
<div class="dl" style="left:430.00px;top:278.00px;width:221.00px;font-size:5.62px;letter-spacing:0.015px;"><span>хамааралгүй байв.</span></div>
<div class="dl" style="left:446.90px;top:288.00px;width:204.10px;font-size:5.62px;text-align:justify;text-align-last:justify;"><span>Эрдэмтэд үгийн баялаг ба адил тестэй шинж чанарыг тодорхойлох тестүүдийн аль</span></div>
<div class="dl" style="left:430.00px;top:298.00px;width:221.00px;font-size:5.62px;text-align:justify;text-align-last:justify;"><span>аль нь үгэн агуулгатай байдаг тул эдгээр тестүүдийн хоорондох корреляци хамааралд</span></div>
<div class="dl" style="left:430.00px;top:308.00px;width:221.00px;font-size:5.62px;text-align:justify;text-align-last:justify;"><span>тулгуурласан үгэн факторыг тодорхойлж болох юм гэж үзжээ.  Олонх эрдэмтэд бүлэг</span></div>
<div class="dl" style="left:430.00px;top:317.00px;width:221.00px;font-size:5.62px;text-align:justify;text-align-last:justify;"><span>фактор, мөн онцгой чадварууд байгаа дээр санал нэгтэй байсан ч факторын тоо, g фактор</span></div>
<div class="dl" style="left:430.00px;top:327.00px;width:221.00px;font-size:5.62px;letter-spacing:-0.087px;"><span>нөлөөлөх хүчин зүйл байх эсэх дээр санал нэгдэж чадаагүй.</span></div>
<div class="dl" style="left:446.90px;top:337.00px;width:204.10px;font-size:5.62px;text-align:justify;text-align-last:justify;"><span>Ийнхүү хэд хэдэн эрдэмтдийн судалгаан дээр үндэслэн &quot;Хүний оюун ухааны</span></div>
<div class="dl" style="left:430.00px;top:347.00px;width:221.00px;font-size:5.62px;letter-spacing:0.037px;"><span>хөгжилд нөлөөлөгч чухал зүйлсийг тодорхойлбол:</span></div>
<div class="dl" style="left:446.90px;top:356.00px;width:204.10px;font-size:5.62px;text-align:justify;text-align-last:justify;"><span>Удамшил, амьдралын туршлага, хүрээлэн буй орчин, хүсэл эрмэлзэл, амьдралын хэв</span></div>
<div class="dl" style="left:430.00px;top:366.00px;width:221.00px;font-size:5.62px;letter-spacing:0.019px;"><span>маяг зэргийг онцгойлон авч үзэх шаардлагатай бэлэн байгаа юм.</span></div>
<div class="dl" style="left:462.90px;top:376.00px;width:188.10px;font-size:5.62px;text-align:justify;text-align-last:justify;"><span>Хүний оюуны хөгжилд удамшил, сурган хүмүүжүүлэх үйлийн аль нь илүү</span></div>
<div class="dl" style="left:430.00px;top:386.00px;width:221.00px;font-size:5.62px;text-align:justify;text-align-last:justify;"><span>чухал болох талаарх олон арван жил маргалдсан боловч өнөө үед танин мэдэхүйн шинжлэх</span></div>
<div class="dl" style="left:430.00px;top:395.00px;width:221.00px;font-size:5.62px;text-align:justify;text-align-last:justify;"><span>ухаан, мэдрэл сэтгэц судлалын шинжлэх ухаан эдгээрийн аль аль нь чухал болохыг хүлээн</span></div>
<div class="dl" style="left:430.00px;top:405.00px;width:221.00px;font-size:5.62px;text-align:justify;text-align-last:justify;"><span>зөвшөөрөөд байна. Амьдралын туршлага нь танин мэдэхүйн харин үйлдлүүдэд чухал</span></div>
<div class="dl" style="left:430.00px;top:415.00px;width:221.00px;font-size:5.62px;text-align:justify;text-align-last:justify;"><span>нөлөөтэй.  Харин удамшил нь сонор сэрэмж, ой санамж, хөл мэдрэмж зэрэг оюун ухааны</span></div>
<div class="dl" style="left:430.00px;top:425.00px;width:221.00px;font-size:5.62px;letter-spacing:0.034px;"><span>чухал хүчин зүйлүүдэд чухал оролцоотой байдаг.</span></div>
<div class="dl" style="left:446.90px;top:434.00px;width:204.10px;font-size:5.62px;text-align:justify;text-align-last:justify;"><span>Түүнчлэн өөрийн орны жишээн дээрээс үзэхэд Монголчууд ихэнх тохиолдолд</span></div>
<div class="dl" style="left:430.00px;top:444.00px;width:221.00px;font-size:5.62px;text-align:justify;text-align-last:justify;"><span>хичээлдээ сайн, онц сурдаг хүүхдийг л ухаантай гэж ерөөсөө ойлгох тал бий.Энэ ойлголт</span></div>
<div class="dl" style="left:430.00px;top:454.00px;width:221.00px;font-size:5.62px;text-align:justify;text-align-last:justify;"><span>нь олон хүүхдийг өөртөө итгэх итгэлгүй болгож, амьдралыг нь үгүй хийсэн болов уу? гэж</span></div>
<div class="dl" style="left:430.00px;top:464.00px;width:221.00px;font-size:5.62px;text-align:justify;text-align-last:justify;"><span>би хувьдаа боддог.Гагцхүү цаашдаа ийм асуудал гаргахгүй ажиллуулж, ард иргэд, гэр бүл</span></div>
<div class="dl" style="left:430.00px;top:473.00px;width:221.00px;font-size:5.62px;text-align:justify;text-align-last:justify;"><span>салат, хамтлагаа бүтээлчийн төлөө монголын ард түмнийг сэтгэлзүйн боловсролтой</span></div>
<div class="dl" style="left:430.00px;top:483.00px;width:221.00px;font-size:5.62px;letter-spacing:0.028px;"><span>болгох шаардлага тулгараад байна.</span></div>
<div class="dl" style="left:446.90px;top:493.00px;width:204.10px;font-size:5.62px;text-align:justify;text-align-last:justify;"><span>Өөр нэг жишээ бол үндэсний цөөнх бүхий орнуудын хувьд тухайн улсад ноёлож</span></div>
<div class="dl" style="left:430.00px;top:503.00px;width:221.00px;font-size:5.62px;text-align:justify;text-align-last:justify;"><span>буй гол үндэстэн ястан нь өөрчлөн улс орны дотор мөрдвөл зохих үнэт зүйлийн загварыг</span></div>
<div class="dl" style="left:430.00px;top:512.00px;width:221.00px;font-size:5.62px;text-align:justify;text-align-last:justify;"><span>гүйцэтгэдэг байна. Харин барууны орнуудын хувьд бол нийгмийн үйл ажиллагааг</span></div>
<div class="dl" style="left:430.00px;top:522.00px;width:221.00px;font-size:5.62px;text-align:justify;text-align-last:justify;"><span>тодорхойлж байдаг гол үнэлэмж баримжаалгааг дунд давхаргынхан илэрхийлж байдаг.</span></div>
<div class="dl" style="left:430.00px;top:532.00px;width:221.00px;font-size:5.62px;text-align:justify;text-align-last:justify;"><span>Үүнээс үзвэл энэхүү хоёр хүчин зүйлээс / ноёлож буйүндэстэн ястны соёл ба анги</span></div>
<div class="dl" style="left:430.00px;top:554.00px;width:221.00px;font-size:5.6px;color:#555;text-align:center;"><span>2</span></div>
<div class="page" style="left:677px"></div>
<div class="dl" style="left:717.00px;top:220.00px;width:221.00px;font-size:5.62px;text-align:justify;text-align-last:justify;"><span>давхаргын шаардлага/ сургалтын арга барил хүүхдэд олгох мэдлэг, чадвар, дадл, тэдгээрийг</span></div>
<div class="dl" style="left:717.00px;top:230.00px;width:221.00px;font-size:5.62px;letter-spacing:-0.028px;"><span>үнэлэн урамшуулах арга хэм хэмжээгээдэг ажээ.</span></div>
<div class="dl" style="left:733.90px;top:239.00px;width:204.10px;font-size:5.62px;text-align:justify;text-align-last:justify;"><span>Жишээ нь АНУ-д маш олон хүүхэд үндэсний цөөнхийн төлөөлөгчид амьдардаг</span></div>
<div class="dl" style="left:717.00px;top:249.00px;width:221.00px;font-size:5.62px;text-align:justify;text-align-last:justify;"><span>боловч сургуулийн тогтолцоогоо дунджаар таван ам бүлтэй, англиар ярьдаг, цагаан арьстан</span></div>
<div class="dl" style="left:717.00px;top:259.00px;width:221.00px;font-size:5.62px;text-align:justify;text-align-last:justify;"><span>гэр бүлээс гаралтай хүүхдүүдийг сургахад үндэслэн зохицуулжээ. Ийм хүүхдүүдийн эцэг</span></div>
<div class="dl" style="left:717.00px;top:269.00px;width:221.00px;font-size:5.62px;text-align:justify;text-align-last:justify;"><span>эх нь нийгэмд их бага ямар нэгэн хэмжээний нэр хүндтэй, байр суурьтайн дээр хувийн бар</span></div>
<div class="dl" style="left:717.00px;top:278.00px;width:221.00px;font-size:5.62px;letter-spacing:0.034px;"><span>сууцтай байдаг. Эдгээр нь өрдийн гэр бүлүүд юм.</span></div>
<div class="dl" style="left:733.90px;top:288.00px;width:204.10px;font-size:5.62px;text-align:justify;text-align-last:justify;"><span>Гэр бүлийн иймэрхүү загвар хүргүүд нь Канад, Франц, Япон зэрэг барууны ихэнх</span></div>
<div class="dl" style="left:717.00px;top:298.00px;width:221.00px;font-size:5.62px;text-align:justify;text-align-last:justify;"><span>орнуудад түгээмэл юм. Энэ маягийн тогтолцооны үед амьдралын бусад хэвшил, заншил</span></div>
<div class="dl" style="left:717.00px;top:308.00px;width:221.00px;font-size:5.62px;text-align:justify;text-align-last:justify;"><span>дэлгэрэх боломж хомс байдаг ажээ. Дээд тушаалын хүнийг хүндэл, үүрэг даалгаварыг</span></div>
<div class="dl" style="left:717.00px;top:318.00px;width:221.00px;font-size:5.62px;text-align:justify;text-align-last:justify;"><span>хугацаанд нь биелүүл, арсалд, өөрийгөө бод гэсэн шаардлагыг сургуулиас хүүхдэд тавьдаг</span></div>
<div class="dl" style="left:717.00px;top:327.00px;width:221.00px;font-size:5.62px;text-align:justify;text-align-last:justify;"><span>бөгөөд үүнд зохицон дасах ёстой. Ийм шаардлагыг дуулгавартайяа мөрдөхийн үндэс нь</span></div>
<div class="dl" style="left:717.00px;top:337.00px;width:221.00px;font-size:5.62px;text-align:justify;text-align-last:justify;letter-spacing:-0.039px;"><span>ирээдүйд дипломтой болж, нэр хүндтэй ажил эрхлэн, хэзээ нэгэн цагт гурван хүүхэдтэй болж</span></div>
<div class="dl" style="left:717.00px;top:347.00px;width:221.00px;font-size:5.62px;letter-spacing:0.024px;"><span>өөрийн гэсэн байр сууц худалдаж авахах гэсэн ялсын найдвар юм.</span></div>
<div class="dl" style="left:733.90px;top:357.00px;width:204.10px;font-size:5.62px;text-align:justify;text-align-last:justify;"><span>Бүх нийтийг хамран сургах ёстой боловсролын тогтолцоог ардчилсан тогтолцоо</span></div>
<div class="dl" style="left:717.00px;top:366.00px;width:221.00px;font-size:5.62px;text-align:justify;text-align-last:justify;"><span>хэмээн үздэг хэдий ч дээд сургуулиудад &quot;доод&quot; зиндааныхны хүүхдүүд цөөн суралцдаг нь</span></div>
<div class="dl" style="left:717.00px;top:376.00px;width:221.00px;font-size:5.62px;text-align:justify;text-align-last:justify;"><span>нууц биш юм. Тэгэхээр нядгэний нь тэдий л олон байж чаддаггүй улмаас оюун ухааны</span></div>
<div class="dl" style="left:717.00px;top:386.00px;width:221.00px;font-size:5.62px;text-align:justify;text-align-last:justify;"><span>хөгжил нь сулавтар байдаг. Олон хүүхэдтэй айлуудын хүүхдэд нэгдэж зарим нэг чанарууд</span></div>
<div class="dl" style="left:717.00px;top:396.00px;width:221.00px;font-size:5.62px;text-align:justify;text-align-last:justify;"><span>зэрэг нь энэ давхаргын хүүхдүүдийн онцлог юм. Энэ үүднээс авч үзвэл орших тогтнож буй</span></div>
<div class="dl" style="left:717.00px;top:405.00px;width:221.00px;font-size:5.62px;text-align:justify;text-align-last:justify;"><span>сургуулийн тогтолцоо нь ийм хүүхдүүдийн онцлог сонирхол үл нийцэх, эсэргэн оролдд</span></div>
<div class="dl" style="left:717.00px;top:415.00px;width:221.00px;font-size:5.62px;text-align:justify;text-align-last:justify;letter-spacing:-0.053px;"><span>нэгээд зөвшөөгүй орчин байж болох юм. Гэхдээ эдгээр хүүхдүүд нь өөрийнхөө дээд зиндааны</span></div>
<div class="dl" style="left:717.00px;top:425.00px;width:221.00px;font-size:5.62px;letter-spacing:0.047px;"><span>үе тэнгийнхэнтэйгээ цуг нэг  л нийгэм соёлын хүрээлэлд амьдардаг.</span></div>
<div class="dl" style="left:733.90px;top:435.00px;width:204.10px;font-size:5.62px;text-align:justify;text-align-last:justify;"><span>Сургуулийн нөгөө нь хүүхдүүдийн хувьд хүлээн авах боломж байгаатай, тэдний</span></div>
<div class="dl" style="left:717.00px;top:444.00px;width:221.00px;font-size:5.62px;text-align:justify;text-align-last:justify;"><span>амьдралын орчин нөхцөлд тохирдоггүй учраас өөртөө тохирсон сэдэл, үнэлэмж,</span></div>
<div class="dl" style="left:717.00px;top:454.00px;width:221.00px;font-size:5.62px;text-align:justify;text-align-last:justify;"><span>баримжаалаа илэрхийлэн хэрэгжүүлэх боломжийг тэр болгон олгодоггүй байж болох</span></div>
<div class="dl" style="left:717.00px;top:464.00px;width:221.00px;font-size:5.62px;text-align:justify;text-align-last:justify;"><span>талтай. Иймээс хүүхдүүдийн сурлагын амжилтыг тухайн үндэстэн ястны дотоод онцлогтой</span></div>
<div class="dl" style="left:717.00px;top:474.00px;width:221.00px;font-size:5.62px;letter-spacing:0.029px;"><span>холбон тайлбарлах нь бүдүүлэг алдаа юм.</span></div>
<div class="dl" style="left:733.90px;top:483.00px;width:204.10px;font-size:5.62px;text-align:justify;text-align-last:justify;"><span>Бид бүгд амьдрал дээр ухаантай мөртлөө дорой буурай амьдардаг, мэргэжилдээ</span></div>
<div class="dl" style="left:717.00px;top:493.00px;width:221.00px;font-size:5.62px;text-align:justify;text-align-last:justify;"><span>чадварлаг боловч гэр бүлдээ асуудалтай, олон талаар гүн сэтгэдэг боловч ганцаардсан аз</span></div>
<div class="dl" style="left:717.00px;top:503.00px;width:221.00px;font-size:5.62px;text-align:justify;text-align-last:justify;"><span>жаргалгүй гэх мэт янз бүрийн нөхцөл байдалд буй олон хүмүүсийг мэддэг. Тэдний алдаа</span></div>
<div class="dl" style="left:717.00px;top:513.00px;width:221.00px;font-size:5.62px;letter-spacing:0.009px;"><span>юу вэ?</span></div>
<div class="dl" style="left:733.90px;top:522.00px;width:204.10px;font-size:5.62px;text-align:justify;text-align-last:justify;"><span>Хүн бүхэн төгс байх шаардлагагүй... Хүн бүхний үнэт зүйл, үзэл бодол, сэтгэл</span></div>
<div class="dl" style="left:717.00px;top:532.00px;width:221.00px;font-size:5.62px;text-align:justify;text-align-last:justify;"><span>ханамж өөр өөр байдаг. Гэвч хүн бүхэн сонголтгүй сонголтоор бус, олон талын мэдлэг, олон</span></div>
<div class="dl" style="left:717.00px;top:542.00px;width:221.00px;font-size:5.62px;text-align:justify;text-align-last:justify;"><span>талын ойлголтыг авч, олон сонголтоос хүссэнээ сонгож амьдрах учиртай. Хүүхэд бүхэн</span></div>
<div class="dl" style="left:717.00px;top:554.00px;width:221.00px;font-size:5.6px;color:#555;text-align:center;"><span>3</span></div>
<div class="page" style="left:964px"></div>
<div class="dl" style="left:1004.00px;top:220.00px;width:221.00px;font-size:5.62px;text-align:justify;text-align-last:justify;"><span>амьдралын зорилготой төрдөг гэж би итгэдэг. Тиймээс хүүхэд бүрийг амьдралын</span></div>
<div class="dl" style="left:1004.00px;top:230.00px;width:221.00px;font-size:5.62px;text-align:justify;text-align-last:justify;"><span>зорилгодоо хүрч, үнэ цэнэтэй сайн сайхан аз жаргалтай амьдралыг бүтээхийн тулд оюун</span></div>
<div class="dl" style="left:1004.00px;top:239.00px;width:221.00px;font-size:5.62px;letter-spacing:0.024px;"><span>ухааны дараах чадваруудыг онцлон хөгжүүлэхийг зорьж байна.</span></div>
<div class="dl" style="left:1004.00px;top:554.00px;width:221.00px;font-size:5.6px;color:#555;text-align:center;"><span>4</span></div>
<div class="caret" style="position:absolute;left:337px;top:300px;width:1px;height:6px;background:#000"></div>
</div>
</body></html>
